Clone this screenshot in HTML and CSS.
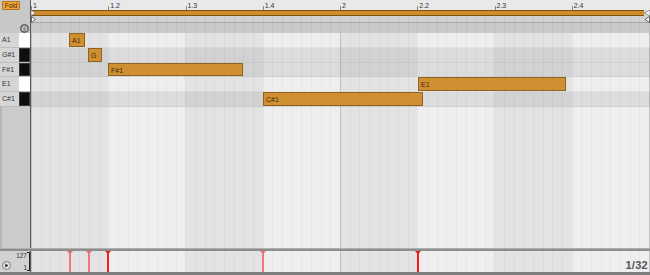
FILE: index.html
```html
<!DOCTYPE html>
<html lang="en">
<head>
    <meta charset="UTF-8">
    <title>MIDI Clip Editor</title>
    <link rel="stylesheet" href="styles.css">
</head>
<body>
    <div class="editor">
        <div class="top">
            <div class="side">
                <div class="side-head">
                    <div class="fold-btn">Fold</div>
                    <svg class="preview-icon" width="9" height="9" viewBox="0 0 9 9">
                        <circle cx="4.5" cy="4.5" r="4" fill="#8c8c8c" stroke="#555" stroke-width="1"/>
                        <path d="M2.6 5.6 V4.4 A1.9 1.9 0 0 1 6.4 4.4 V5.6" fill="none" stroke="#e8e8e8" stroke-width="0.9"/>
                        <rect x="2.2" y="5" width="1.1" height="1.6" fill="#e8e8e8"/>
                        <rect x="5.7" y="5" width="1.1" height="1.6" fill="#e8e8e8"/>
                    </svg>
                </div>
                <div class="keys">
                    <div class="key key-white"><span>A1</span><i></i></div>
                    <div class="key key-black"><span>G#1</span><i></i></div>
                    <div class="key key-black short"><span>F#1</span><i></i></div>
                    <div class="key key-white"><span>E1</span><i></i></div>
                    <div class="key key-black"><span>C#1</span><i></i></div>
                </div>
                <div class="side-fill"></div>
            </div>
            <div class="main">
                <div class="ruler">
                    <div class="beat">1</div>
                    <div class="beat">1.2</div>
                    <div class="beat">1.3</div>
                    <div class="beat">1.4</div>
                    <div class="beat">2</div>
                    <div class="beat">2.2</div>
                    <div class="beat">2.3</div>
                    <div class="beat">2.4</div>
                </div>
                <div class="loop-strip grid-lines">
                    <div class="loop-bar">
                        <svg width="5" height="6" viewBox="0 0 5 6"><path d="M0 0 L4.5 3 L0 6 Z" fill="#fff" stroke="#555" stroke-width="0.6"/></svg>
                    </div>
                    <svg width="6" height="6" viewBox="0 0 6 6"><path d="M6 0 L0.5 3 L6 6 Z" fill="#fff" stroke="#555" stroke-width="0.6"/></svg>
                </div>
                <div class="marker-strip grid-lines">
                    <svg width="5" height="7" viewBox="0 0 5 7"><path d="M0.5 0.5 L4.5 3.5 L0.5 6.5 Z" fill="#fff" stroke="#444" stroke-width="0.8"/></svg>
                    <svg width="6" height="7" viewBox="0 0 6 7"><path d="M5.5 0.5 L1 3.5 L5.5 6.5 Z" fill="#fff" stroke="#444" stroke-width="0.8"/></svg>
                </div>
                <div class="fold-strip grid-lines"></div>
                <div class="lanes grid">
                    <div class="row">
                        <div class="note" style="left: 38px; width: 16px;">A1</div>
                    </div>
                    <div class="row row-black">
                        <div class="note" style="left: 57px; width: 14px;">G</div>
                    </div>
                    <div class="row row-black short">
                        <div class="note" style="left: 77px; width: 135px;">F#1</div>
                    </div>
                    <div class="row">
                        <div class="note" style="left: 387px; width: 148px;">E1</div>
                    </div>
                    <div class="row row-black">
                        <div class="note" style="left: 232px; width: 160px;">C#1</div>
                    </div>
                </div>
            </div>
        </div>
        <div class="divider"></div>
        <div class="velocity">
            <div class="vel-side">
                <svg class="play-icon" width="9" height="9" viewBox="0 0 9 9">
                    <circle cx="4.5" cy="4.5" r="4" fill="#e4e4e4" stroke="#666" stroke-width="0.8"/>
                    <path d="M3.3 2.6 L6.4 4.5 L3.3 6.4 Z" fill="#222"/>
                </svg>
                <div class="vel-scale">
                    <span>127</span>
                    <span>1</span>
                </div>
            </div>
            <div class="vel-lane grid">
                <div class="vel-marker soft" style="left: 36px;"><b></b><i></i></div>
                <div class="vel-marker soft" style="left: 55px;"><b></b><i></i></div>
                <div class="vel-marker" style="left: 74px;"><b></b><i></i></div>
                <div class="vel-marker soft" style="left: 229px;"><b></b><i></i></div>
                <div class="vel-marker" style="left: 384px;"><b></b><i></i></div>
                <div class="grid-size">1/32</div>
            </div>
        </div>
        <div class="bottom-border"></div>
    </div>
</body>
</html>
```

FILE: styles.css
```css
* {
    margin: 0;
    padding: 0;
    box-sizing: border-box;
}
body {
    font-family: 'Liberation Sans', Arial, sans-serif;
    background: #d0d0d0;
}
.editor {
    width: 650px;
    height: 275px;
    display: flex;
    flex-direction: column;
    overflow: hidden;
}
.top {
    display: flex;
    height: 248px;
}

/* left column */
.side {
    width: 31px;
    display: flex;
    flex-direction: column;
    border-right: 1px solid #5a5a5a;
}
.side-head {
    height: 33px;
    background: #c8c8c8;
    display: flex;
    flex-direction: column;
    justify-content: space-between;
    padding: 1px 1px 0 2px;
}
.fold-btn {
    width: 18px;
    height: 9px;
    background: #f2a33a;
    border: 1px solid #b37420;
    border-radius: 1px;
    font-size: 6.5px;
    line-height: 7px;
    color: #3a2a10;
    text-align: center;
}
.preview-icon {
    align-self: flex-end;
    margin-bottom: 0;
}
.keys {
    display: flex;
    flex-direction: column;
}
.key {
    height: 15px;
    display: flex;
    justify-content: space-between;
    align-items: stretch;
    background: #d6d6d6;
    border-bottom: 1px solid #bcbcbc;
}
.key.short {
    height: 14px;
}
.key span {
    font-size: 7px;
    color: #333;
    line-height: 14px;
    padding-left: 2px;
}
.key i {
    width: 11px;
    background: #fff;
}
.key-black i {
    background: #0e0e0e;
    border: 1px solid #3a3a3a;
}
.side-fill {
    flex: 1;
    background: #cbcbcb;
    border-left: 2px solid #b4b4b4;
}

/* timeline */
.main {
    width: 619px;
    display: flex;
    flex-direction: column;
}
.ruler {
    height: 10px;
    display: flex;
    background: #e9e9e9;
}
.beat {
    flex: 0 0 77.25px;
    font-size: 7px;
    line-height: 11px;
    color: #333;
    padding-left: 2px;
    background: linear-gradient(#8a8a8a, #8a8a8a) left bottom / 1px 4px no-repeat;
}
.grid-lines {
    background-image: repeating-linear-gradient(to right, rgba(0, 0, 0, 0.05) 0 1px, transparent 1px 9.656px);
}
.loop-strip {
    height: 6px;
    display: flex;
    background-color: #d6d6d6;
}
.loop-bar {
    flex: 1;
    height: 6px;
    background: #d08c2c;
    border-top: 1px solid #7e5312;
    border-bottom: 1px solid #7e5312;
    display: flex;
    align-items: center;
}
.loop-bar svg {
    margin-top: -1px;
    margin-bottom: -1px;
}
.marker-strip {
    height: 7px;
    display: flex;
    justify-content: space-between;
    background-color: #d2d2d2;
    border-bottom: 1px solid #a8a8a8;
}
.fold-strip {
    height: 10px;
    background-color: #c9c9c9;
}
.grid {
    background-image:
        repeating-linear-gradient(to right, rgba(0, 0, 0, 0.12) 0 1px, transparent 1px 309px),
        repeating-linear-gradient(to right, rgba(0, 0, 0, 0.035) 0 1px, transparent 1px 9.656px),
        repeating-linear-gradient(to right, #e3e3e3 0 77.25px, #eeeeee 77.25px 154.5px);
}
.lanes {
    flex: 1;
    display: flex;
    flex-direction: column;
}
.row {
    position: relative;
    height: 15px;
    border-bottom: 1px solid rgba(0, 0, 0, 0.04);
}
.row.short {
    height: 14px;
}
.row-black {
    background: rgba(0, 0, 0, 0.075);
}
.note {
    position: absolute;
    top: 0;
    bottom: 0;
    background: #d08f31;
    border: 1px solid #8e6220;
    font-size: 7px;
    line-height: 13px;
    color: #3b2a0e;
    padding-left: 2px;
    white-space: nowrap;
    overflow: hidden;
}

/* velocity editor */
.divider {
    height: 3px;
    background: #8e8e8e;
    border-top: 1px solid #b0b0b0;
}
.velocity {
    height: 21px;
    display: flex;
}
.vel-side {
    width: 31px;
    background: #d2d2d2;
    display: flex;
    align-items: flex-end;
    justify-content: space-between;
    padding: 1px 0 1px 2px;
    border-right: 1px solid #5a5a5a;
}
.play-icon {
    margin-bottom: 1px;
}
.vel-scale {
    height: 19px;
    display: flex;
    flex-direction: column;
    justify-content: space-between;
    align-items: flex-end;
    padding-right: 2px;
    border-right: 1px solid #222;
    font-size: 6.5px;
    line-height: 7px;
    color: #333;
    background:
        linear-gradient(#222, #222) right top / 2px 1px no-repeat,
        linear-gradient(#222, #222) right bottom / 2px 1px no-repeat;
}
.vel-lane {
    position: relative;
    flex: 1;
}
.vel-marker {
    position: absolute;
    top: 0;
    bottom: 0;
    width: 6px;
    display: flex;
    flex-direction: column;
    align-items: center;
}
.vel-marker b {
    width: 0;
    height: 0;
    border-left: 3px solid transparent;
    border-right: 3px solid transparent;
    border-top: 3px solid #e01818;
}
.vel-marker i {
    flex: 1;
    width: 2px;
    margin-top: -1px;
    background: #ff1a1a;
}
.vel-marker.soft b {
    border-top-color: #e86a6a;
}
.vel-marker.soft i {
    background: #f57575;
}
.grid-size {
    position: absolute;
    right: 2px;
    bottom: 1px;
    font-size: 11px;
    font-weight: bold;
    color: #555;
    letter-spacing: 0.3px;
}
.bottom-border {
    height: 3px;
    background: #7e7e7e;
}
```
